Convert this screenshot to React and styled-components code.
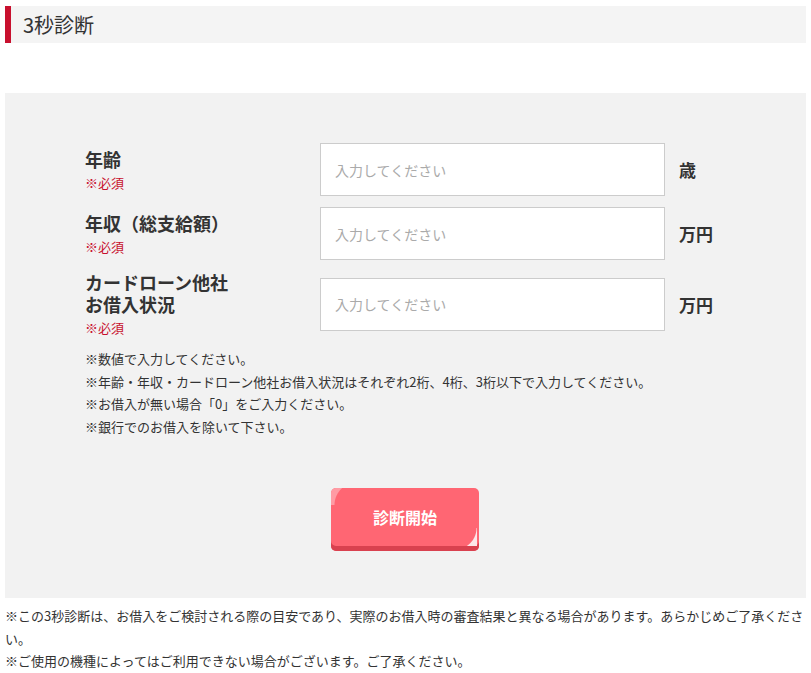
import React from 'react'
import styled, { createGlobalStyle } from 'styled-components'

const GlobalStyle = createGlobalStyle`
  body {
    margin: 0;
    background: #fff;
    color: #333;
    font-family: "Noto Sans CJK JP", "Noto Sans", sans-serif;
  }
`

const Page = styled.div`
  padding: 6px 5px 0 5px;
`

const Heading = styled.h2`
  display: flex;
  align-items: center;
  height: 37px;
  margin: 0;
  padding-left: 12px;
  border-left: 6px solid #c8102e;
  background: #f4f4f4;
  color: #333;
  font-size: 20px;
  font-weight: 400;
`

const Panel = styled.section`
  margin-top: 50px;
  padding: 50px 0 47px 80px;
  background: #f2f2f2;
`

const Rows = styled.div`
  display: flex;
  flex-direction: column;
  gap: 11px;
`

const Row = styled.div`
  display: flex;
  align-items: center;
`

const Label = styled.div`
  width: 235px;
`

const LabelText = styled.div`
  font-size: 18px;
  font-weight: 700;
  line-height: 22px;
  color: #333;
`

const Required = styled.div`
  margin-top: 3px;
  font-size: 13px;
  line-height: 19px;
  color: #c8102e;
`

const Input = styled.input`
  box-sizing: border-box;
  width: 345px;
  height: 53px;
  padding: 0 14px;
  border: 1px solid #cccccc;
  background: #fff;
  font-family: inherit;
  font-size: 14px;
  color: #333;
  outline: none;

  &::placeholder {
    color: #aaa;
  }
`

const Unit = styled.span`
  margin-left: 14px;
  font-size: 17px;
  font-weight: 700;
  color: #333;
`

const Notes = styled.ul`
  margin: 11px 0 0 0;
  padding: 0;
  list-style: none;
  font-size: 13px;
  line-height: 22.5px;
  color: #333;
`

const ButtonWrap = styled.div`
  display: flex;
  justify-content: center;
  margin: 50px 0 0 -81px;
`

const StartButton = styled.button`
  position: relative;
  overflow: hidden;
  width: 148px;
  height: 63px;
  padding: 0 0 5px 0;
  border: none;
  border-radius: 5px;
  background: #ff6673;
  box-shadow: inset 0 -5px 0 #d9414f;
  color: #fff;
  font-family: inherit;
  font-size: 16px;
  font-weight: 700;
  cursor: pointer;

  &::before {
    content: '';
    position: absolute;
    top: 0;
    left: 0;
    width: 26px;
    height: 17px;
    background: radial-gradient(circle at 100% 100%, transparent 22px, #ff9ba4 23px);
  }

  &::after {
    content: '';
    position: absolute;
    right: 2px;
    bottom: 5px;
    width: 22px;
    height: 18px;
    background: radial-gradient(circle at 0 0, transparent 21px, #fde6e9 22px);
  }
`

const Footer = styled.div`
  margin-top: 7px;
  font-size: 13px;
  line-height: 22.5px;
  color: #333;
`

const fields = [
  { label: ['年齢'], unit: '歳' },
  { label: ['年収（総支給額）'], unit: '万円' },
  { label: ['カードローン他社', 'お借入状況'], unit: '万円' }
]

const notes = [
  '※数値で入力してください。',
  '※年齢・年収・カードローン他社お借入状況はそれぞれ2桁、4桁、3桁以下で入力してください。',
  '※お借入が無い場合「0」をご入力ください。',
  '※銀行でのお借入を除いて下さい。'
]

const App = () => (
  <Page>
    <GlobalStyle />
    <Heading>3秒診断</Heading>
    <Panel>
      <Rows>
        {fields.map(field => (
          <Row key={field.label[0]}>
            <Label>
              {field.label.map(line => (
                <LabelText key={line}>{line}</LabelText>
              ))}
              <Required>※必須</Required>
            </Label>
            <Input type="text" placeholder="入力してください" />
            <Unit>{field.unit}</Unit>
          </Row>
        ))}
      </Rows>
      <Notes>
        {notes.map(note => (
          <li key={note}>{note}</li>
        ))}
      </Notes>
      <ButtonWrap>
        <StartButton type="button">診断開始</StartButton>
      </ButtonWrap>
    </Panel>
    <Footer>
      ※この3秒診断は、お借入をご検討される際の目安であり、実際のお借入時の審査結果と異なる場合があります。あらかじめご了承ください。
      <br />
      ※ご使用の機種によってはご利用できない場合がございます。ご了承ください。
    </Footer>
  </Page>
)

export default App
